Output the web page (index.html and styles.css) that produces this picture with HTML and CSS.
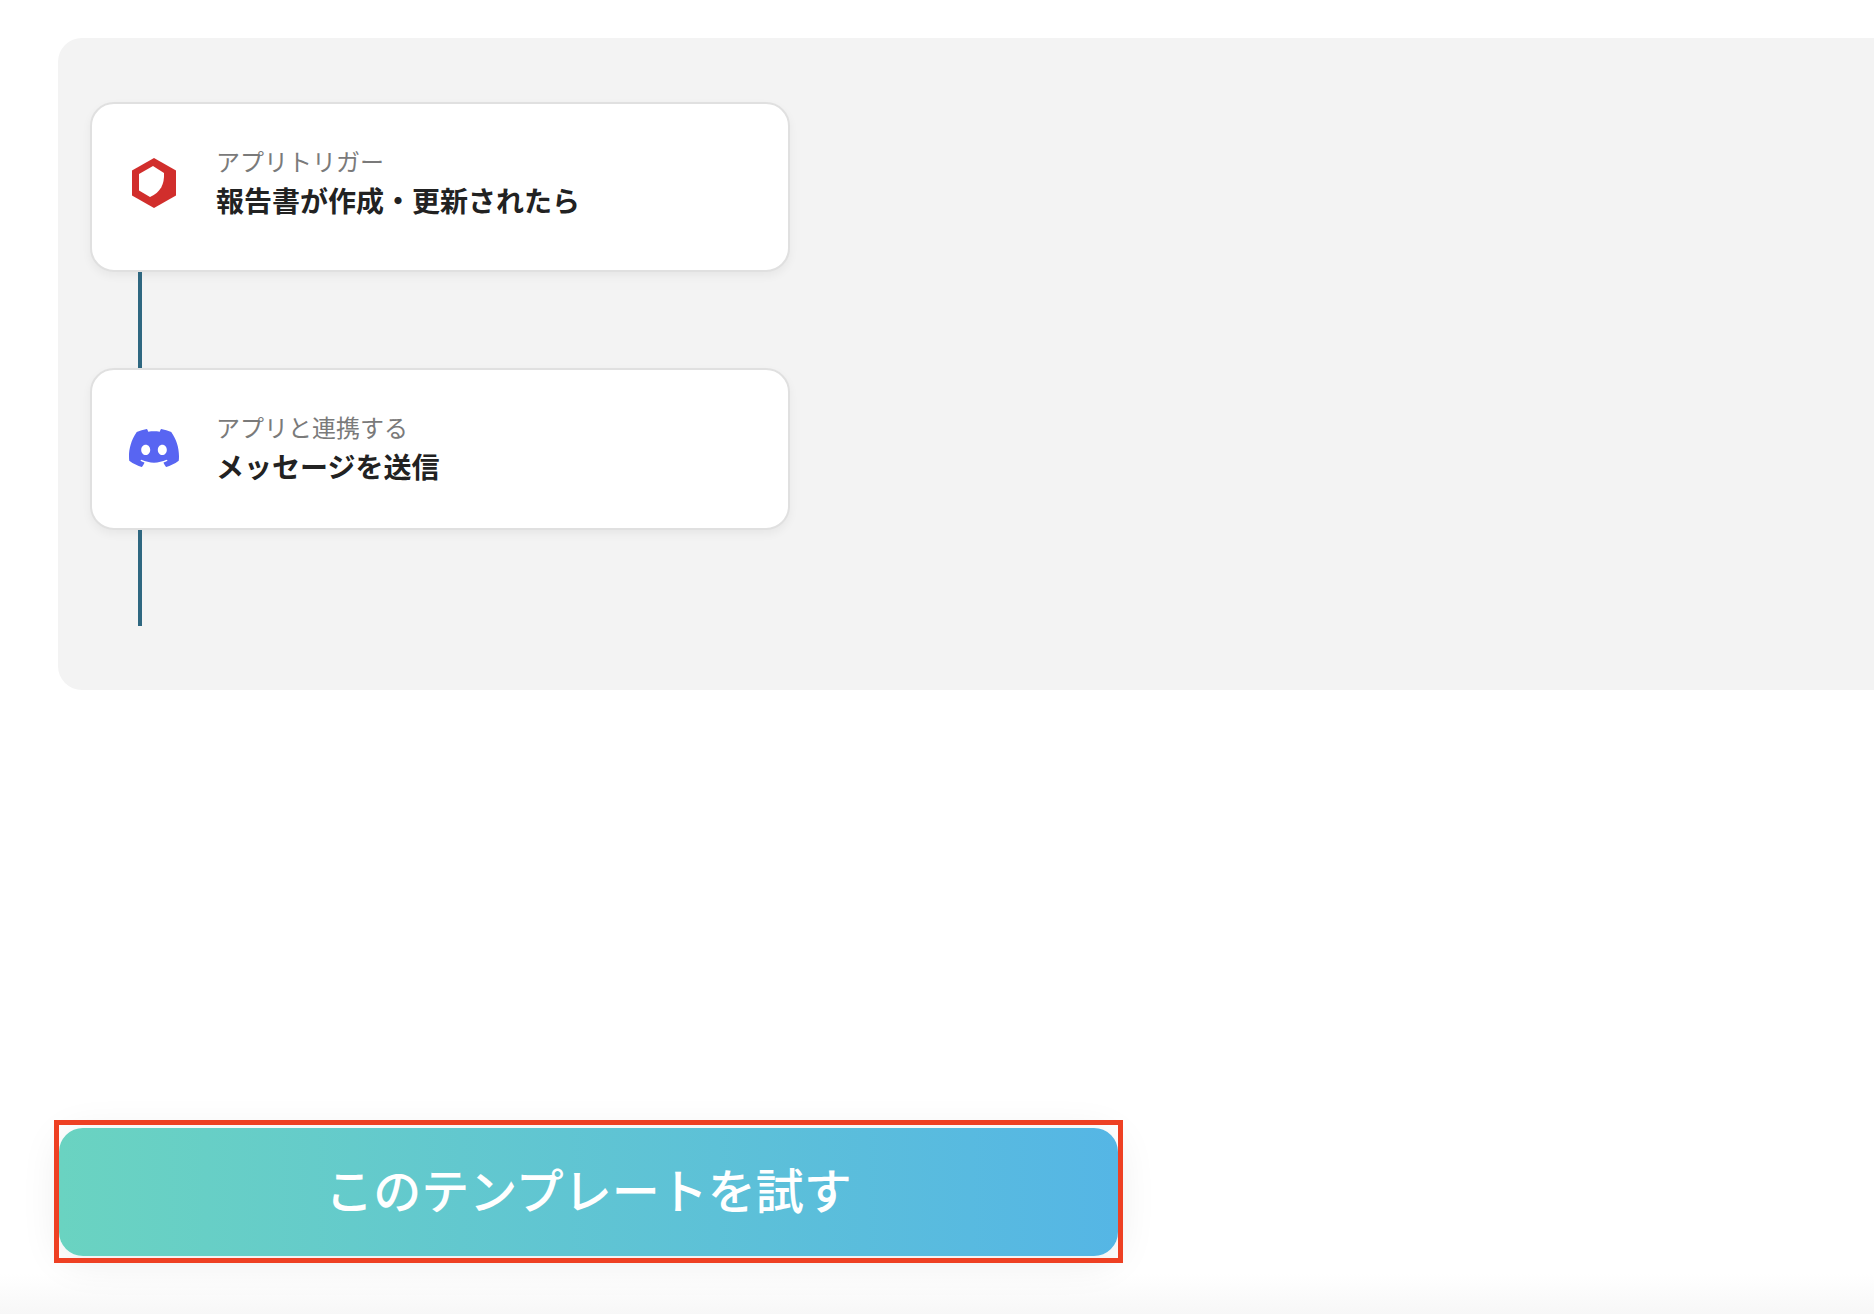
FILE: index.html
```html
<!DOCTYPE html>
<html lang="ja">
<head>
    <title>このテンプレートを試す</title>
    <link rel="stylesheet" href="styles.css">
</head>
<body>
    <div class="flow-panel">
        <div class="flow-card trigger-card">
            <div class="flow-icon">
                <svg width="44" height="50" viewBox="0 0 44 50">
                    <polygon points="22,0 44,12.5 44,37.5 22,50 0,37.5 0,12.5" fill="#d12e2c"/>
                    <path d="M21 8 L32 15 C32.5 26 29 34 18 39 L7 32.5 V16 Z" fill="#fff"/>
                </svg>
            </div>
            <div class="flow-text">
                <p class="flow-label">アプリトリガー</p>
                <p class="flow-title">報告書が作成・更新されたら</p>
            </div>
        </div>
        <div class="flow-line"></div>
        <div class="flow-card">
            <div class="flow-icon">
                <svg width="50" height="50" viewBox="0 0 24 24">
                    <path fill="#5865f2" d="M20.317 4.3698a19.7913 19.7913 0 00-4.8851-1.5152.0741.0741 0 00-.0785.0371c-.211.3753-.4447.8648-.6083 1.2495-1.8447-.2762-3.68-.2762-5.4868 0-.1636-.3933-.4058-.8742-.6177-1.2495a.077.077 0 00-.0785-.037 19.7363 19.7363 0 00-4.8852 1.515.0699.0699 0 00-.0321.0277C.5334 9.0458-.319 13.5799.0992 18.0578a.0824.0824 0 00.0312.0561c2.0528 1.5076 4.0413 2.4228 5.9929 3.0294a.0777.0777 0 00.0842-.0276c.4616-.6304.8731-1.2952 1.226-1.9942a.076.076 0 00-.0416-.1057c-.6528-.2476-1.2743-.5495-1.8722-.8923a.077.077 0 01-.0076-.1277c.1258-.0943.2517-.1923.3718-.2914a.0743.0743 0 01.0776-.0105c3.9278 1.7933 8.18 1.7933 12.0614 0a.0739.0739 0 01.0785.0095c.1202.099.246.1981.3728.2924a.077.077 0 01-.0066.1276 12.2986 12.2986 0 01-1.873.8914.0766.0766 0 00-.0407.1067c.3604.698.7719 1.3628 1.225 1.9932a.076.076 0 00.0842.0286c1.961-.6067 3.9495-1.5219 6.0023-3.0294a.077.077 0 00.0313-.0552c.5004-5.177-.8382-9.6739-3.5485-13.6604a.061.061 0 00-.0312-.0286zM8.02 15.3312c-1.1825 0-2.1569-1.0857-2.1569-2.419 0-1.3332.9555-2.4189 2.157-2.4189 1.2108 0 2.1757 1.0952 2.1568 2.419 0 1.3332-.9555 2.4189-2.1569 2.4189zm7.9748 0c-1.1825 0-2.1569-1.0857-2.1569-2.419 0-1.3332.9554-2.4189 2.1569-2.4189 1.2108 0 2.1757 1.0952 2.1568 2.419 0 1.3332-.946 2.4189-2.1568 2.4189Z"/>
                </svg>
            </div>
            <div class="flow-text">
                <p class="flow-label">アプリと連携する</p>
                <p class="flow-title">メッセージを送信</p>
            </div>
        </div>
        <div class="flow-line"></div>
    </div>

    <div class="try-wrap">
        <button class="try-button">このテンプレートを試す</button>
    </div>

    <div class="bottom-fade"></div>
</body>
</html>
```

FILE: styles.css
```css
html, body {
    overflow: hidden;
}
body {
    font-family: "Noto Sans CJK JP", "Noto Sans", sans-serif;
    margin: 0;
    background: #fff;
}
.flow-panel {
    box-sizing: border-box;
    height: 652px;
    margin: 38px -60px 0 58px;
    padding: 64px 32px 0;
    background: #f3f3f3;
    border-radius: 24px;
}
.flow-card {
    box-sizing: border-box;
    display: flex;
    align-items: center;
    width: 700px;
    height: 162px;
    padding: 0 0 2px 30px;
    background: #fff;
    border: 2px solid #e0e0e0;
    border-radius: 24px;
    box-shadow: 0 4px 10px rgba(0, 0, 0, 0.05);
}
.trigger-card {
    height: 170px;
    padding-bottom: 8px;
}
.flow-icon {
    display: flex;
    justify-content: center;
    align-items: center;
    width: 64px;
    margin-right: 30px;
}
.flow-text {
    margin-bottom: 2px;
}
.trigger-card .flow-text {
    margin-bottom: 3px;
}
.flow-label {
    margin: 0;
    font-size: 24px;
    line-height: 36px;
    color: #7a7a7a;
}
.flow-title {
    margin: 1px 0 0;
    font-size: 28px;
    line-height: 40px;
    font-weight: 700;
    color: #222;
}
.flow-line {
    width: 4px;
    height: 96px;
    margin-left: 48px;
    background: #2e6780;
}
.try-wrap {
    position: relative;
    width: 1059px;
    margin: 438px 0 0 59px;
}
/* red frame drawn over the button */
.try-wrap::after {
    content: "";
    position: absolute;
    top: -8px;
    right: -5px;
    bottom: -7px;
    left: -5px;
    border: 5px solid #ee4023;
    pointer-events: none;
}
.try-button {
    display: block;
    width: 100%;
    height: 128px;
    padding: 0 0 9px;
    font-family: inherit;
    font-size: 48px;
    font-weight: 500;
    color: #fff;
    background: linear-gradient(90deg, #6ad3c1, #55b6e5);
    border: none;
    border-radius: 24px;
    box-shadow: 0 6px 40px rgba(0, 0, 0, 0.08);
    cursor: pointer;
}
.bottom-fade {
    height: 40px;
    margin-top: 18px;
    background: linear-gradient(#fff, #f7f7f7);
}
```
